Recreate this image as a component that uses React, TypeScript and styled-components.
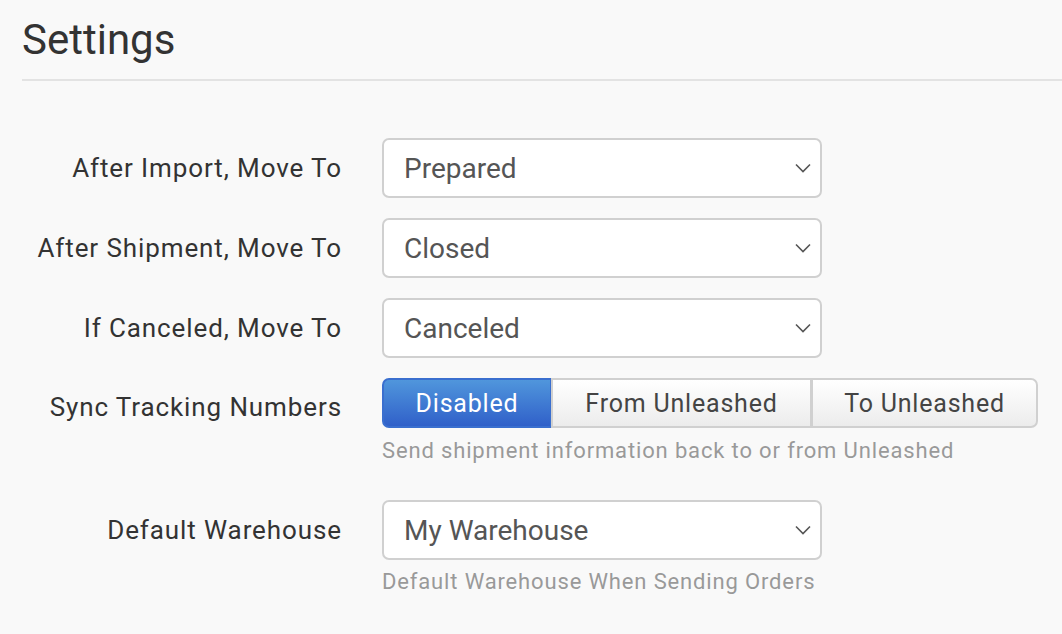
import React, { useState } from 'react';
import styled, { createGlobalStyle } from 'styled-components';

const GlobalStyle = createGlobalStyle`
  html, body {
    margin: 0;
    padding: 0;
    background: #f9f9f9;
    font-family: Roboto, "Liberation Sans", Arial, sans-serif;
    color: #333;
  }
`;

const Page = styled.div`
  padding: 14px 0 0 22px;
  min-height: 620px;
`;

const Title = styled.h1`
  margin: 0;
  font-size: 42px;
  font-weight: 400;
  line-height: 52px;
  color: #333;
  padding-bottom: 13px;
  border-bottom: 2px solid #e3e3e3;
`;

const Form = styled.div`
  display: grid;
  grid-template-columns: 320px auto;
  column-gap: 40px;
  align-items: start;
  margin-top: 57px;
`;

const Label = styled.div<{ $short?: boolean }>`
  text-align: right;
  font-size: 26px;
  letter-spacing: 0.9px;
  color: #333;
  white-space: nowrap;
  height: ${(p) => (p.$short ? '50px' : '60px')};
  line-height: ${(p) => (p.$short ? '58px' : '60px')};
`;

const Field = styled.div<{ $help?: boolean }>`
  display: flex;
  flex-direction: column;
  align-items: flex-start;
  margin-bottom: ${(p) => (p.$help ? '0' : '20px')};
`;

const SelectBox = styled.div`
  position: relative;
  box-sizing: border-box;
  width: 440px;
  height: 60px;
  background: #fff;
  border: 2px solid #d0d0d0;
  border-radius: 7px;
  display: flex;
  align-items: center;
  padding: 0 40px 0 20px;
  font-size: 28px;
  color: #555;
`;

const Chevron = styled.svg`
  position: absolute;
  right: 9px;
  top: 50%;
  transform: translateY(-50%);
`;

const Group = styled.div`
  display: flex;
  box-sizing: border-box;
  height: 50px;
`;

const SegButton = styled.button<{ $active?: boolean; $w: number }>`
  box-sizing: border-box;
  width: ${(p) => p.$w}px;
  height: 50px;
  margin: 0;
  margin-left: -1px;
  padding: 0;
  font-family: inherit;
  font-size: 25px;
  letter-spacing: 0.8px;
  cursor: pointer;
  color: ${(p) => (p.$active ? '#fff' : '#444')};
  border: 2px solid ${(p) => (p.$active ? '#3a6fcf' : '#d0d0d0')};
  background: ${(p) =>
    p.$active
      ? 'linear-gradient(to bottom, #5096dc 0%, #3060c9 100%)'
      : 'linear-gradient(to bottom, #ffffff 0%, #ececec 100%)'};
  border-radius: 0;
  &:first-child {
    margin-left: 0;
    border-radius: 7px 0 0 7px;
  }
  &:last-child {
    border-radius: 0 7px 7px 0;
  }
`;

const HelpText = styled.div<{ $last?: boolean }>`
  font-size: 22px;
  letter-spacing: 0.85px;
  line-height: 28px;
  color: #999;
  margin: ${(p) => (p.$last ? '8px 0 0' : '9px 0 35px')};
`;

const Select = ({ value }: { value: string }) => (
  <SelectBox>
    {value}
    <Chevron width="16" height="10" viewBox="0 0 16 10">
      <path d="M1 1.5 L8 8.5 L15 1.5" fill="none" stroke="#555" strokeWidth="1.6" />
    </Chevron>
  </SelectBox>
);

const options = [
  { label: 'Disabled', w: 170 },
  { label: 'From Unleashed', w: 261 },
  { label: 'To Unleashed', w: 227 },
];

const App = () => {
  const [sync, setSync] = useState('Disabled');

  return (
    <Page>
      <GlobalStyle />
      <Title>Settings</Title>
      <Form>
        <Label>After Import, Move To</Label>
        <Field>
          <Select value="Prepared" />
        </Field>

        <Label>After Shipment, Move To</Label>
        <Field>
          <Select value="Closed" />
        </Field>

        <Label>If Canceled, Move To</Label>
        <Field>
          <Select value="Canceled" />
        </Field>

        <Label $short>Sync Tracking Numbers</Label>
        <Field $help>
          <Group>
            {options.map((o) => (
              <SegButton key={o.label} $w={o.w} $active={sync === o.label} onClick={() => setSync(o.label)}>
                {o.label}
              </SegButton>
            ))}
          </Group>
          <HelpText>Send shipment information back to or from Unleashed</HelpText>
        </Field>

        <Label>Default Warehouse</Label>
        <Field $help>
          <Select value="My Warehouse" />
          <HelpText $last>Default Warehouse When Sending Orders</HelpText>
        </Field>
      </Form>
    </Page>
  );
};

export default App;
